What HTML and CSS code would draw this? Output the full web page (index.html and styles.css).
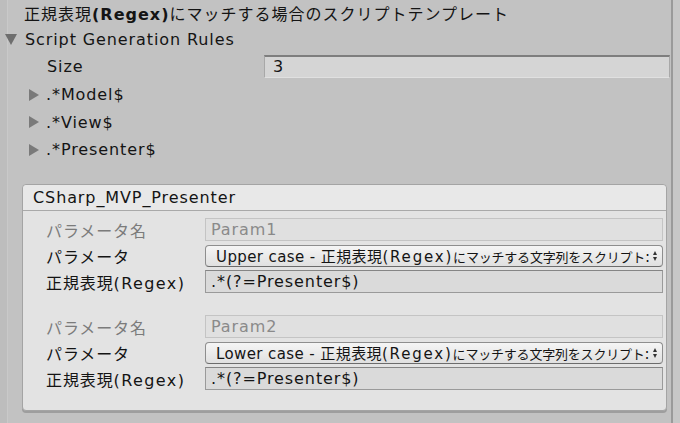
FILE: index.html
```html
<!DOCTYPE html>
<html lang="ja">
<head>
<meta charset="utf-8">
<title>Script Generation Rules</title>
<link rel="stylesheet" href="styles.css">
</head>
<body>
<div class="window">
  <div class="gutter"></div>
  <main class="inspector">
    <div class="title">正規表現<b>(Regex)</b>にマッチする場合のスクリプトテンプレート</div>

    <div class="row rules-row">
      <span class="arrow down"></span>
      <span>Script Generation Rules</span>
    </div>

    <div class="row size-row">
      <span class="label">Size</span>
      <span class="field">3</span>
    </div>

    <div class="row item-row">
      <span class="arrow right"></span>
      <span>.*Model$</span>
    </div>
    <div class="row item-row">
      <span class="arrow right"></span>
      <span>.*View$</span>
    </div>
    <div class="row item-row">
      <span class="arrow right"></span>
      <span>.*Presenter$</span>
    </div>

    <section class="box">
      <header class="box-head">CSharp_MVP_Presenter</header>
      <div class="box-body">
        <div class="group">
          <div class="prop">
            <span class="plabel dim">パラメータ名</span>
            <span class="pfield disabled">Param1</span>
          </div>
          <div class="prop">
            <span class="plabel">パラメータ</span>
            <span class="popup"><span class="popup-text">Upper case - 正規表現<span class="lat">(Regex)</span><span class="kana">にマッチする文字列をスクリプト</span>:</span><span class="updown"></span></span>
          </div>
          <div class="prop">
            <span class="plabel">正規表現<span class="lat">(Regex)</span></span>
            <span class="pfield">.*(?=Presenter$)</span>
          </div>
        </div>
        <div class="group">
          <div class="prop">
            <span class="plabel dim">パラメータ名</span>
            <span class="pfield disabled">Param2</span>
          </div>
          <div class="prop">
            <span class="plabel">パラメータ</span>
            <span class="popup"><span class="popup-text">Lower case - 正規表現<span class="lat">(Regex)</span><span class="kana">にマッチする文字列をスクリプト</span>:</span><span class="updown"></span></span>
          </div>
          <div class="prop">
            <span class="plabel">正規表現<span class="lat">(Regex)</span></span>
            <span class="pfield">.*(?=Presenter$)</span>
          </div>
        </div>
      </div>
    </section>
  </main>
  <div class="scrollbar"></div>
</div>
</body>
</html>
```

FILE: styles.css
```css
* { box-sizing: border-box; }

html, body {
  margin: 0;
  height: 100%;
  background: #c2c2c2;
}

body {
  font-family: "DejaVu Sans", "Noto Sans CJK JP", sans-serif;
  font-size: 16px;
  letter-spacing: 0.9px;
  color: #141414;
  overflow: hidden;
}

.window {
  display: flex;
  height: 423px;
}

/* left edge of the inspector pane */
.gutter {
  width: 8px;
  flex: none;
  background: #bdbdbd;
  border-right: 1px solid #c9c9c9;
}

.inspector {
  flex: 1;
  min-width: 0;
}

/* right edge: scrollbar track */
.scrollbar {
  width: 9px;
  flex: none;
  background: #c7c7c7;
  border-left: 2px solid #9a9a9a;
}

.title {
  margin-top: 2px;
  height: 25px;
  line-height: 25px;
  padding-left: 16px;
  letter-spacing: 1px;
  white-space: nowrap;
}
.title b { font-weight: bold; }

.row {
  display: flex;
  align-items: center;
  white-space: nowrap;
}

.rules-row { height: 25px; }
.size-row { height: 29px; padding-left: 39px; }
.item-row { height: 27.5px; padding-left: 21px; }
.item-row:first-of-type { height: 28px; }

.arrow {
  display: inline-block;
  width: 0;
  height: 0;
  flex: none;
}
.arrow.down {
  margin-left: -3px;
  margin-right: 8px;
  border-left: 6px solid transparent;
  border-right: 6px solid transparent;
  border-top: 11px solid #6e6e6e;
}
.arrow.right {
  margin-right: 7px;
  border-top: 6px solid transparent;
  border-bottom: 6px solid transparent;
  border-left: 10px solid #7a7a7a;
}

.size-row .label { width: 217px; flex: none; }
.size-row .field {
  flex: 1;
  margin-right: 1px;
  height: 23px;
  line-height: 20px;
  padding-left: 8px;
  background: #d5d5d5;
  border: 1px solid #a8a8a8;
  border-top: 2px solid #7e7e7e;
  border-bottom-color: #e0e0e0;
}

.box {
  margin: 20px 4px 0 14px;
  background: #e3e3e3;
  border: 1px solid #a4a4a4;
  border-radius: 4px;
  box-shadow: 0 2px 0 #9e9e9e;
}

.box-head {
  height: 26px;
  line-height: 25px;
  padding-left: 10px;
  background: #e8e8e8;
  border-bottom: 1px solid #a9a9a9;
  border-radius: 4px 4px 0 0;
  white-space: nowrap;
}

.box-body {
  padding: 6px 3px 18px 23px;
  display: flex;
  flex-direction: column;
  gap: 19px;
}

.group {
  display: flex;
  flex-direction: column;
}

.prop {
  display: flex;
  align-items: center;
  height: 26px;
  white-space: nowrap;
}

.plabel {
  width: 159px;
  flex: none;
}
.plabel.dim { color: #7b7b7b; }
.lat { letter-spacing: 1.4px; }

.pfield {
  flex: 1;
  height: 23px;
  line-height: 21px;
  padding-left: 5px;
  background: #dadada;
  border: 1px solid #9a9a9a;
  border-top-color: #858585;
  overflow: hidden;
}
.pfield.disabled {
  color: #8a8a8a;
  background: #e0e0e0;
  border-color: #c4c4c4;
}

.popup {
  flex: 1;
  display: flex;
  align-items: center;
  height: 22px;
  padding: 0 4px 0 10px;
  font-size: 15px;
  letter-spacing: 0.4px;
  background: linear-gradient(#f5f5f5, #e0e0e0);
  border: 1px solid #8e8e8e;
  border-bottom-color: #6c6c6c;
  border-radius: 4px;
  overflow: hidden;
}
.popup-text {
  flex: 1;
  min-width: 0;
  overflow: hidden;
  white-space: nowrap;
}
.popup .lat { letter-spacing: 1.8px; }
.popup .kana {
  font-size: 13px;
  letter-spacing: -0.2px;
}

/* up/down chevrons of the popup button */
.updown {
  position: relative;
  flex: none;
  width: 5px;
  height: 10px;
  margin-left: 2px;
}
.updown::before, .updown::after {
  content: "";
  position: absolute;
  left: 0;
  border-left: 2.5px solid transparent;
  border-right: 2.5px solid transparent;
}
.updown::before { top: 0; border-bottom: 4px solid #333; }
.updown::after { bottom: 0; border-top: 4px solid #333; }
```
